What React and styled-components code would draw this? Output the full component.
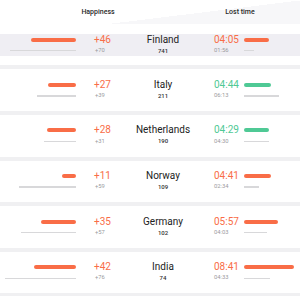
import React from "react";
import styled, { createGlobalStyle } from "styled-components";

const Global = createGlobalStyle`
  html, body { margin: 0; padding: 0; background: #fff; overflow: hidden; }
  body { font-family: Roboto, "Noto Sans", sans-serif; -webkit-font-smoothing: antialiased; }
`;

const ORANGE = "#f96d47";
const GREEN = "#4fc995";

const Page = styled.div`
  width: 300px;
  height: 296px;
  overflow: hidden;
`;

const Header = styled.div`
  height: 24px;
  display: grid;
  grid-template-columns: 76px 56px 62px 49px 1fr;
  align-items: center;
  background: linear-gradient(173deg, #fff 37px, #f7f7f9 37px);
`;

const HeaderLabel = styled.div`
  grid-column: ${(p) => p.$col};
  justify-self: center;
  font-size: 7px;
  font-weight: 500;
  color: #2a2a2a;
  transform: translateX(${(p) => p.$shift}px);
  white-space: nowrap;
`;

const List = styled.div`
  border-bottom: 4px solid #f0f0f2;
`;

const Row = styled.div`
  box-sizing: border-box;
  height: ${(p) => (p.$first ? "41.4px" : "45.6px")};
  border-top: ${(p) => (p.$first ? "none" : "4px solid #f0f0f2")};
  padding-top: 10px;
`;

const Band = styled.div`
  height: 22px;
  display: grid;
  grid-template-columns: 76px 56px 62px 49px 1fr;
  grid-template-rows: 11px 11px;
  background: ${(p) => (p.$active ? "#efeef3" : "transparent")};
`;

const BarCell = styled.div`
  display: flex;
  align-items: center;
  justify-content: ${(p) => (p.$right ? "flex-start" : "flex-end")};
  padding-left: ${(p) => (p.$right ? "1px" : "0")};
`;

const MainBar = styled.div`
  height: 4px;
  border-radius: 2px;
  background: ${(p) => p.$color};
`;

const SubBar = styled.div`
  height: 1.5px;
  background: #d8d8da;
`;

const NumCell = styled.div`
  display: flex;
  align-items: center;
  padding-left: ${(p) => p.$pad}px;
  line-height: 1;
  white-space: nowrap;
`;

const MainValue = styled.span`
  font-size: 10px;
  color: ${(p) => p.$color};
`;

const SubValue = styled.span`
  font-size: 5.8px;
  color: #9a9a9e;
`;

const NameCell = styled.div`
  display: flex;
  align-items: center;
  justify-content: center;
  line-height: 1;
  white-space: nowrap;
`;

const Name = styled.span`
  font-size: 10px;
  color: #222;
`;

const Pop = styled.span`
  font-size: 6px;
  font-weight: 500;
  color: #333;
`;

const rows = [
  { name: "Finland", h: "+46", hs: "+70", hw: 45, hsw: 66, pop: 741, t: "04:05", tc: ORANGE, tw: 25, ts: "01:56", tsw: 10, active: true },
  { name: "Italy", h: "+27", hs: "+39", hw: 28, hsw: 39, pop: 211, t: "04:44", tc: GREEN, tw: 27, ts: "06:13", tsw: 35 },
  { name: "Netherlands", h: "+28", hs: "+31", hw: 29, hsw: 32, pop: 190, t: "04:29", tc: GREEN, tw: 25, ts: "04:30", tsw: 25 },
  { name: "Norway", h: "+11", hs: "+59", hw: 14, hsw: 57, pop: 109, t: "04:41", tc: ORANGE, tw: 27, ts: "02:34", tsw: 15 },
  { name: "Germany", h: "+35", hs: "+57", hw: 35, hsw: 55, pop: 102, t: "05:57", tc: ORANGE, tw: 34, ts: "04:03", tsw: 23 },
  { name: "India", h: "+42", hs: "+76", hw: 42, hsw: 71, pop: 74, t: "08:41", tc: ORANGE, tw: 50, ts: "04:33", tsw: 26 },
];

export default function App() {
  return (
    <Page>
      <Global />
      <Header>
        <HeaderLabel $col="1 / 4" $shift={1}>Happiness</HeaderLabel>
        <HeaderLabel $col="4 / 6" $shift={-7}>Lost time</HeaderLabel>
      </Header>
      <List>
        {rows.map((r, i) => (
          <Row key={r.name} $first={i === 0}>
            <Band $active={r.active}>
              <BarCell>
                <MainBar $color={ORANGE} style={{ width: r.hw }} />
              </BarCell>
              <NumCell $pad={18}>
                <MainValue $color={ORANGE}>{r.h}</MainValue>
              </NumCell>
              <NameCell>
                <Name>{r.name}</Name>
              </NameCell>
              <NumCell $pad={20}>
                <MainValue $color={r.tc}>{r.t}</MainValue>
              </NumCell>
              <BarCell $right>
                <MainBar $color={r.tc} style={{ width: r.tw }} />
              </BarCell>

              <BarCell>
                <SubBar style={{ width: r.hsw }} />
              </BarCell>
              <NumCell $pad={19}>
                <SubValue>{r.hs}</SubValue>
              </NumCell>
              <NameCell>
                <Pop>{r.pop}</Pop>
              </NameCell>
              <NumCell $pad={20}>
                <SubValue>{r.ts}</SubValue>
              </NumCell>
              <BarCell $right>
                <SubBar style={{ width: r.tsw }} />
              </BarCell>
            </Band>
          </Row>
        ))}
      </List>
    </Page>
  );
}
